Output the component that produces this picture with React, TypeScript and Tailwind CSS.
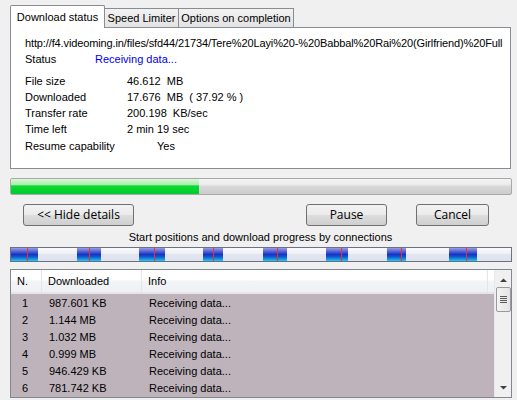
import React from "react";

const segs: [number, number, number][] = [
  [11, 38, 27],
  [77, 101, 89],
  [139, 165, 154],
  [203, 223, 213],
  [263, 287, 277],
  [326, 348, 341],
  [387, 406, 401],
  [449, 477, 466],
];

const rows: [string, string][] = [
  ["1", "987.601 KB"],
  ["2", "1.144 MB"],
  ["3", "1.032 MB"],
  ["4", "0.999 MB"],
  ["5", "946.429 KB"],
  ["6", "781.742 KB"],
];

function ConnBar() {
  return (
    <svg width="502" height="15" className="block">
      <defs>
        <linearGradient id="bg" x1="0" y1="0" x2="0" y2="1">
          <stop offset="0" stopColor="#fafbfd" />
          <stop offset="0.45" stopColor="#eef0f7" />
          <stop offset="0.5" stopColor="#e2e6f1" />
          <stop offset="1" stopColor="#dde1ee" />
        </linearGradient>
        <linearGradient id="bl" x1="0" y1="0" x2="0" y2="1">
          <stop offset="0" stopColor="#9a9ce2" />
          <stop offset="0.25" stopColor="#5a66d6" />
          <stop offset="0.5" stopColor="#1634c4" />
          <stop offset="0.7" stopColor="#1060d0" />
          <stop offset="1" stopColor="#22c8f0" />
        </linearGradient>
      </defs>
      <rect x="0.5" y="0.5" width="501" height="14" fill="url(#bg)" stroke="#6d7280" />
      {segs.map(([a, b, r], i) => (
        <g key={i}>
          <rect x={a - 10} y="1" width={b - a} height="13" fill="url(#bl)" />
          <rect x={r - 10} y="1" width="1" height="13" fill="#ee3030" />
        </g>
      ))}
    </svg>
  );
}

function ProgressBar() {
  return (
    <div className="w-[502px] h-[17px] border border-[#a8a8a8] rounded-[2px] bg-[linear-gradient(to_bottom,#f4f4f4_0%,#ececec_35%,#d8d8d8_50%,#cccccc_100%)] relative overflow-hidden">
      <div className="h-full w-[188px] bg-[linear-gradient(to_bottom,#d6f8d6_0%,#a8eca8_40%,#10d838_45%,#00d22c_80%,#06c830_100%)]" />
    </div>
  );
}

function Btn({ label, w }: { label: string; w: string }) {
  return (
    <div
      className={`${w} h-[22px] border border-[#707070] rounded-[3px] bg-[linear-gradient(to_bottom,#f2f2f2_0%,#ebebeb_50%,#dddddd_51%,#cfcfcf_100%)] flex items-center justify-center text-[12px] text-black font-['Open_Sans','Noto_Sans',sans-serif]`}
    >
      {label}
    </div>
  );
}

export default function App() {
  return (
    <div className="w-[517px] h-[400px] bg-[#f0f0f0] overflow-hidden text-[11px] text-black font-['Liberation_Sans',Arial,sans-serif] leading-[16px]">
      {/* tabs */}
      <div className="flex items-end h-[27px] pl-[10px] pt-[4px] whitespace-nowrap text-[11px]">
        <div className="w-[95px] h-[23px] bg-white border border-[#898c95] border-b-0 rounded-t-[2px] flex items-start justify-center pt-[3px] relative z-10 -mb-px pb-px">
          Download status
        </div>
        <div className="w-[74px] h-[19px] bg-[linear-gradient(to_bottom,#f2f2f2,#e3e3e3)] border border-[#898c95] border-b-0 border-l-0 flex items-center justify-center">
          Speed Limiter
        </div>
        <div className="w-[115px] h-[19px] bg-[linear-gradient(to_bottom,#f2f2f2,#e3e3e3)] border border-[#898c95] border-b-0 border-l-0 flex items-center justify-center">
          Options on completion
        </div>
      </div>
      {/* panel */}
      <div className="ml-[10px] w-[501px] h-[142px] bg-white border border-[#898c95] pt-[7px] pl-[14px] text-[11px] leading-[16px]">
        <div className="whitespace-nowrap tracking-[-0.12px]">
          http://f4.videoming.in/files/sfd44/21734/Tere%20Layi%20-%20Babbal%20Rai%20(Girlfriend)%20Full
        </div>
        <div className="flex">
          <span className="w-[70px]">Status</span>
          <span className="text-[#0000ee]">Receiving data...</span>
        </div>
        <div className="mt-[6px] flex">
          <span className="w-[102px]">File size</span>
          <span>46.612&nbsp; MB</span>
        </div>
        <div className="flex">
          <span className="w-[102px]">Downloaded</span>
          <span>17.676&nbsp; MB&nbsp; ( 37.92 % )</span>
        </div>
        <div className="flex">
          <span className="w-[102px]">Transfer rate</span>
          <span>200.198&nbsp; KB/sec</span>
        </div>
        <div className="flex">
          <span className="w-[102px]">Time left</span>
          <span>2 min 19 sec</span>
        </div>
        <div className="flex mt-px">
          <span className="w-[132px]">Resume capability</span>
          <span>Yes</span>
        </div>
      </div>
      {/* progress */}
      <div className="ml-[10px] mt-[9px]">
        <ProgressBar />
      </div>
      {/* buttons */}
      <div className="flex mt-[9px] h-[22px]">
        <div className="ml-[23px]">
          <Btn label="<< Hide details" w="w-[111px]" />
        </div>
        <div className="ml-[172px]">
          <Btn label="Pause" w="w-[81px]" />
        </div>
        <div className="ml-[29px]">
          <Btn label="Cancel" w="w-[73px]" />
        </div>
      </div>
      <div className="mt-[3px] h-[17px] text-center text-[11px] leading-[17px] pl-[4px]">
        Start positions and download progress by connections
      </div>
      <div className="ml-[10px] mt-px">
        <ConnBar />
      </div>
      {/* list */}
      <div className="ml-[10px] mt-[7px] w-[502px] h-[129px] border border-[#828790] bg-[#beb3bb] flex overflow-hidden text-[11px]">
        <div className="flex-1 flex flex-col">
          <div className="h-[24px] flex bg-[linear-gradient(to_bottom,#ffffff_0%,#ffffff_45%,#f3f4f6_50%,#eef0f3_100%)] border-b-2 border-[#e3e5e8]">
            <div className="w-[31px] border-r border-[#e3e5e8] pl-[6px] flex items-center">N.</div>
            <div className="w-[100px] border-r border-[#e3e5e8] pl-[6px] flex items-center">Downloaded</div>
            <div className="w-[346px] border-r border-[#e3e5e8] pl-[6px] flex items-center">Info</div>
            <div className="flex-1" />
          </div>
          {rows.map(([n, d]) => (
            <div key={n} className="h-[17px] flex items-center">
              <div className="w-[31px] pl-[11px]">{n}</div>
              <div className="w-[100px] pl-[7px]">{d}</div>
              <div className="pl-[7px]">Receiving data...</div>
            </div>
          ))}
        </div>
        <div className="w-[17px] bg-[#f0f0f0] flex flex-col items-center border-l border-[#e8e8e8]">
          <svg width="17" height="17" className="block">
            <path d="M5 12 L8.5 8.5 L12 12 Z" fill="#404040" />
          </svg>
          <div className="w-[15px] h-[25px] border border-[#9a9a9a] rounded-[2px] bg-[linear-gradient(to_right,#f4f4f4,#e4e4e4)] flex flex-col items-center justify-center gap-[1px]">
            <div className="w-[7px] h-px bg-[#5a5a5a]" />
            <div className="w-[7px] h-px bg-[#5a5a5a]" />
            <div className="w-[7px] h-px bg-[#5a5a5a]" />
            <div className="w-[7px] h-px bg-[#5a5a5a]" />
          </div>
          <div className="flex-1" />
          <svg width="17" height="17" className="block mb-[2px]">
            <path d="M5 8 L12 8 L8.5 11.5 Z" fill="#404040" />
          </svg>
        </div>
      </div>
    </div>
  );
}
